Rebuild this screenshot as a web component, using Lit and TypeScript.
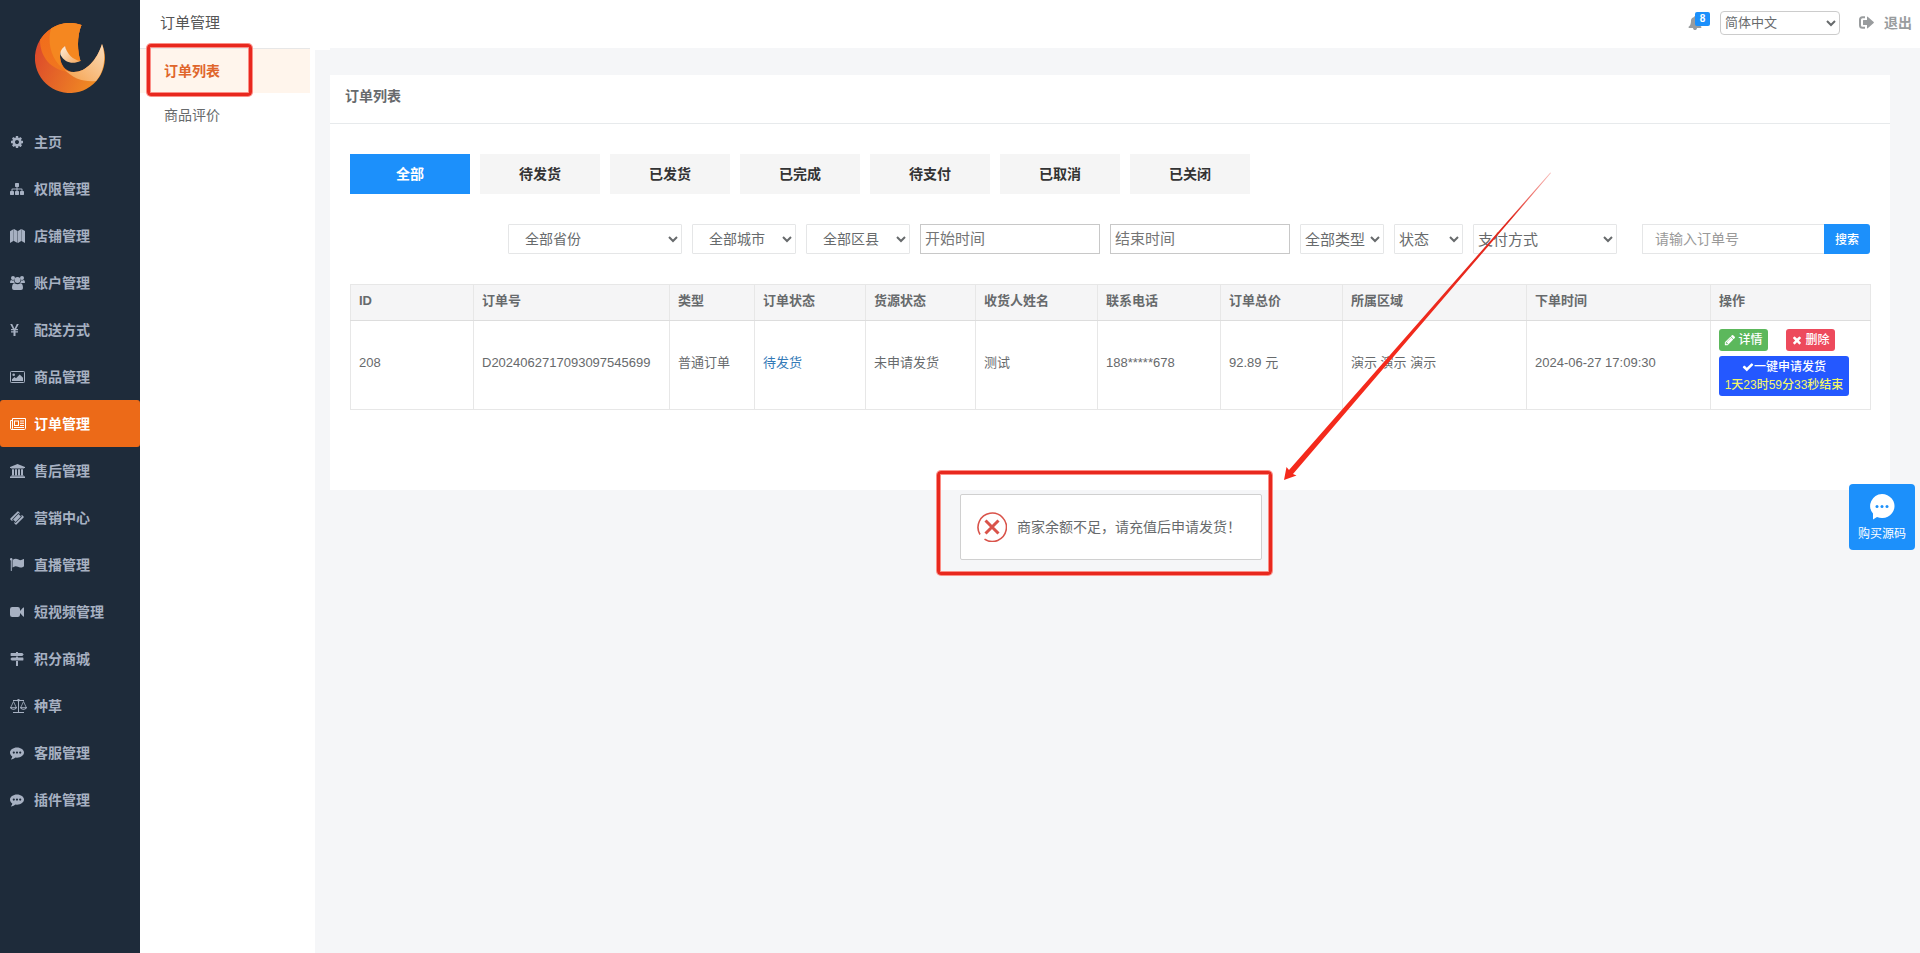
import { LitElement, html, css, svg } from "lit";
import { customElement } from "lit/decorators.js";
import { classMap } from "lit/directives/class-map.js";

interface Glyph {
  box: string;
  w: number;
  h: number;
  body: unknown;
}

const fa = (d: string, size: number): Glyph => ({
  box: "0 0 1792 1792",
  w: size,
  h: size,
  body: svg`<path d=${d}></path>`,
});

const comment = (): Glyph => ({
  box: "0 0 14 14",
  w: 14,
  h: 14,
  body: svg`<path fill-rule="evenodd" d="M7 1.5C10.9 1.5 14 3.9 14 6.6S10.9 11.7 7 11.7Q6.2 11.7 5.5 11.6Q3.7 13.2 1.3 13.4Q1 13.4 1 13.1Q2.200 12 2.300 10.500C.9 9.600 0 8.200 0 6.600C0 3.900 3.100 1.500 7 1.500ZM3.800 5.500A1.100 1.100 0 1 0 3.800 7.700A1.100 1.100 0 1 0 3.800 5.500ZM7 5.500A1.100 1.100 0 1 0 7 7.700A1.100 1.100 0 1 0 7 5.500ZM10.200 5.500A1.100 1.100 0 1 0 10.200 7.700A1.100 1.100 0 1 0 10.200 5.500Z"></path>`,
});

const ICONS: Record<string, Glyph> = {
  cog: fa(
    "M1152 896q0-106-75-181t-181-75-181 75-75 181 75 181 181 75 181-75 75-181zm512-109v222q0 12-8 23t-20 13l-185 28q-19 54-39 91 35 50 107 138 10 12 10 25t-9 23q-27 37-99 108t-94 71q-12 0-26-9l-138-108q-44 23-91 38-16 136-29 186-7 28-36 28h-222q-14 0-24.500-8.500t-11.500-21.500l-28-184q-49-16-90-37l-141 107q-10 9-25 9-14 0-25-11-126-114-165-168-7-10-7-23 0-12 8-23 15-21 51-66.500t54-70.500q-27-50-41-99l-183-27q-13-2-21-12.500t-8-23.500v-222q0-12 8-23t19-13l186-28q14-46 39-92-40-57-107-138-10-12-10-24 0-10 9-23 26-36 98.500-107.500t94.500-71.500q13 0 26 10l138 107q44-23 91-38 16-136 29-186 7-28 36-28h222q14 0 24.500 8.500t11.500 21.500l28 184q49 16 90 37l142-107q9-9 24-9 13 0 25 10 129 119 165 170 7 8 7 22 0 12-8 23-15 21-51 66.500t-54 70.500q26 50 41 98l183 28q13 2 21 12.500t8 23.500z",
    14
  ),
  sitemap: fa(
    "M1792 1248v320q0 40-28 68t-68 28h-320q-40 0-68-28t-28-68v-320q0-40 28-68t68-28h96v-192h-512v192h96q40 0 68 28t28 68v320q0 40-28 68t-68 28h-320q-40 0-68-28t-28-68v-320q0-40 28-68t68-28h96v-192h-512v192h96q40 0 68 28t28 68v320q0 40-28 68t-68 28h-320q-40 0-68-28t-28-68v-320q0-40 28-68t68-28h96v-192q0-52 38-90t90-38h512v-192h-96q-40 0-68-28t-28-68v-320q0-40 28-68t68-28h320q40 0 68 28t28 68v320q0 40-28 68t-68 28h-96v192h512q52 0 90 38t38 90v192h96q40 0 68 28t28 68z",
    14
  ),
  map: {
    box: "0 0 15 14",
    w: 15,
    h: 14,
    body: svg`<path d="M0 2.200L3.700 0V11.800L0 14ZM4 0L7.600 2V14L4 12ZM8 2L11.200 0V12L8 14ZM11.500 0L15 2V14L11.500 12Z"></path>`,
  },
  users: {
    box: "0 0 15 14",
    w: 15,
    h: 14,
    body: svg`<circle cx="3" cy="2" r="2"></circle><circle cx="12" cy="2" r="2"></circle><circle cx="7.500" cy="4" r="3"></circle><path d="M0 6.500Q0 4 1.200 4Q3 5 4 4.300Q4 6.200 5 7H1.200Q0 7 0 6.500ZM15 6.500Q15 4 13.800 4Q12 5 11 4.300Q11 6.200 10 7H13.800Q15 7 15 6.500ZM2 12Q2 7.200 4.600 7.200Q6 8.200 7.500 8.200T10.400 7.200Q13 7.200 13 12Q13 14 11 14H4Q2 14 2 12Z"></path>`,
  },
  yen: {
    box: "0 0 9 12",
    w: 9,
    h: 12,
    body: svg`<path d="M.2 0H2.200L4.500 4.700L6.800 0H8.800L6.200 5H8V6.200H5.500V7.300H8V8.500H5.500V12H3.500V8.500H1V7.300H3.500V6.200H1V5H2.800Z"></path>`,
  },
  image: {
    box: "0 0 15 12",
    w: 15,
    h: 12,
    body: svg`<rect x=".500" y=".500" width="14" height="11" rx=".800" fill="none" stroke="currentColor"></rect><circle cx="3.700" cy="3.700" r="1.300"></circle><path d="M2 10V8.200L4.500 6L6 7.300L9.700 3.500L13 6.700V10Z"></path>`,
  },
  paper: {
    box: "0 0 16 12",
    w: 16,
    h: 12,
    body: svg`<path d="M2.500 .500H15.500V10.300Q15.500 11.500 14.300 11.500H1.700Q.500 11.500 .500 10.300V2.500H2.500M2.500 .500V10.300Q2.500 11.400 1.500 11.500" fill="none" stroke="currentColor"></path><path fill-rule="evenodd" d="M4 2.500H9V8H4ZM5 3.500V7H8V3.500ZM10 2.500H14V3.500H10ZM10 4.700H14V5.700H10ZM10 7H14V8H10ZM4 9H14V10H4Z"></path>`,
  },
  bank: {
    box: "0 0 15 14",
    w: 15,
    h: 14,
    body: svg`<path d="M7.500 0L15 3V4H14Q14 4.600 13.300 4.600H1.700Q1 4.600 1 4H0V3ZM2 5.200H4V11.200H5V5.200H7V11.200H8V5.200H10V11.200H11V5.200H13V11.200H13.400Q14 11.200 14 11.800H1Q1 11.200 1.600 11.200H2ZM.700 12.300H14.300Q15 12.300 15 13V14H0V13Q0 12.300 .700 12.300Z"></path>`,
  },
  ticket: {
    box: "0 0 14 14",
    w: 14,
    h: 14,
    body: svg`<path fill-rule="evenodd" d="M8.400 .400L9.700 1.700Q9.200 3.300 10.200 4T12.300 4.300L13.600 5.600Q14 6.100 13.600 6.500L6.500 13.600Q6 14 5.600 13.600L4.300 12.300Q4.800 10.700 3.800 10T1.700 9.700L.4 8.400Q0 7.900 .4 7.500L7.500 .4Q8 0 8.400 .4ZM8.400 2.100L2.100 8.400L5.600 11.900L11.900 5.600ZM8.400 3.100L10.900 5.600L5.600 10.900L3.100 8.400Z"></path>`,
  },
  flag: {
    box: "0 0 14 13",
    w: 14,
    h: 13,
    body: svg`<circle cx="1.200" cy="1.200" r="1.200"></circle><path d="M.800 1H1.800V12.500Q1.800 13 1.300 13T.800 12.500ZM2.500 2Q4.300 .8 5.800 .8Q7 .8 8.500 1.600T11 2Q12 1.800 13.300 1Q14 .8 14 1.500V8Q14 8.400 13.500 8.700Q11.600 9.700 10.300 9.600Q9.200 9.500 7.900 8.800T5.600 8.200Q4.200 8.400 2.500 9.400Z"></path>`,
  },
  video: {
    box: "0 0 14 12",
    w: 14,
    h: 12,
    body: svg`<path d="M2.200 1H7.800Q10 1 10 3.200V4.900L13.200 1.600Q14 1 14 2V10Q14 11 13.200 10.400L10 7.100V8.800Q10 11 7.800 11H2.200Q0 11 0 8.800V3.200Q0 1 2.200 1Z"></path>`,
  },
  signs: {
    box: "0 0 14 14",
    w: 14,
    h: 14,
    body: svg`<path d="M6 0H8V1H12.300L13.700 2.500L12.300 4H1Q.6 4 .6 3.600V1.400Q.6 1 1 1H6ZM6 4.500H8V5.500H13Q13.400 5.500 13.400 5.900V8.100Q13.400 8.500 13 8.500H1.700L.3 7L1.700 5.500H6ZM6 9H8V13.500Q8 14 7.500 14H6.500Q6 14 6 13.500Z"></path>`,
  },
  scales: {
    box: "0 0 17 14",
    w: 17,
    h: 14,
    body: svg`<g fill="none" stroke="currentColor"><path d="M3 1.500H14M8.500 1V13M3 13.500H14"></path><path d="M.700 8.500L3.500 2.500L6.300 8.500M10.700 8.500L13.500 2.500L16.300 8.500" stroke-width=".8"></path></g><circle cx="8.500" cy="1.300" r="1.300"></circle><path fill-rule="evenodd" d="M0 8H7Q6.600 10.800 3.500 10.800T0 8ZM1.200 8.700Q1.800 9.800 3.500 9.800T5.800 8.700ZM10 8H17Q16.600 10.800 13.500 10.800T10 8ZM11.200 8.700Q11.800 9.800 13.500 9.800T15.800 8.700Z"></path>`,
  },
  comment: comment(),
  bell: fa(
    "M1728 1408q0 52-38 90t-90 38h-448q0 106-75 181t-181 75-181-75-75-181h-448q-52 0-90-38t-38-90q50-42 91-88t85-119.500 74.500-158.500 50-206 19.500-260q0-152 117-282.500t307-158.500q-8-19-8-39 0-40 28-68t68-28 68 28 28 68q0 20-8 39 190 28 307 158.500t117 282.500q0 139 19.500 260t50 206 74.500 158.500 85 119.500 91 88z",
    14
  ),
  signout: {
    box: "0 0 15 13",
    w: 15,
    h: 13,
    body: svg`<path d="M6 1.200H3.500Q1 1.200 1 3.700V9.300Q1 11.800 3.500 11.800H6" fill="none" stroke="currentColor" stroke-width="2"></path><path d="M4.500 4H8V1.200Q8 .300 8.700 .800L14.700 6Q15.100 6.500 14.700 7L8.700 12.200Q8 12.700 8 11.800V9H4.500Q4 9 4 8.500V4.500Q4 4 4.500 4Z"></path>`,
  },
  pencil: fa(
    "M491 1536l91-91-235-235-91 91v107h128v128h107zm523-928q0-22-22-22-10 0-17 7l-542 542q-7 7-7 17 0 22 22 22 10 0 17-7l542-542q7-7 7-17zm-54-192l416 416-832 832h-416v-416zm683 96q0 53-37 90l-166 166-416-416 166-165q36-38 90-38 53 0 91 38l235 234q37 39 37 91z",
    12
  ),
  times: fa(
    "M1490 1322q0 40-28 68l-136 136q-28 28-68 28t-68-28l-294-294-294 294q-28 28-68 28t-68-28l-136-136q-28-28-28-68t28-68l294-294-294-294q-28-28-28-68t28-68l136-136q28-28 68-28t68 28l294 294 294-294q28-28 68-28t68 28l136 136q28 28 28 68t-28 68l-294 294 294 294q28 28 28 68z",
    12
  ),
  check: fa(
    "M1671 566q0 40-28 68l-724 724-136 136q-28 28-68 28t-68-28l-136-136-362-362q-28-28-28-68t28-68l136-136q28-28 68-28t68 28l294 295 656-657q28-28 68-28t68 28l136 136q28 28 28 68z",
    12
  ),
};

const icon = (name: string) => {
  const g = ICONS[name];
  return html`<svg class="icon" viewBox=${g.box} width=${g.w} height=${g.h} fill="currentColor" aria-hidden="true">${g.body}</svg>`;
};

const MENU = [
  ["cog", "主页"],
  ["sitemap", "权限管理"],
  ["map", "店铺管理"],
  ["users", "账户管理"],
  ["yen", "配送方式"],
  ["image", "商品管理"],
  ["paper", "订单管理"],
  ["bank", "售后管理"],
  ["ticket", "营销中心"],
  ["flag", "直播管理"],
  ["video", "短视频管理"],
  ["signs", "积分商城"],
  ["scales", "种草"],
  ["comment", "客服管理"],
  ["comment", "插件管理"],
];

const TABS = ["全部", "待发货", "已发货", "已完成", "待支付", "已取消", "已关闭"];

const COLUMNS: [string, number][] = [
  ["ID", 123],
  ["订单号", 196],
  ["类型", 85],
  ["订单状态", 111],
  ["货源状态", 110],
  ["收货人姓名", 122],
  ["联系电话", 123],
  ["订单总价", 122],
  ["所属区域", 184],
  ["下单时间", 184],
  ["操作", 160],
];

@customElement("app-root")
export class AppRoot extends LitElement {
  static styles = css`
    :host {
      display: block;
      min-height: 100vh;
      font-family: "Liberation Sans", "Noto Sans CJK SC", sans-serif;
      font-size: 13px;
      line-height: 18px;
      color: #676a6c;
    }
    * {
      box-sizing: border-box;
    }
    a {
      color: inherit;
      text-decoration: none;
    }
    button,
    input,
    select {
      font-family: inherit;
      color: inherit;
      margin: 0;
    }
    ul {
      list-style: none;
      margin: 0;
      padding: 0;
    }
    h1,
    h2 {
      margin: 0;
      font-weight: 400;
    }
    .icon {
      display: block;
      flex: none;
    }
    .page {
      position: relative;
      display: flex;
      min-height: 100vh;
      overflow: hidden;
      background: #f5f6f8;
    }

    .side {
      flex: none;
      width: 140px;
      background: #1e2b3a;
    }
    .logo {
      display: block;
      padding: 23px 35px 25px;
    }
    .logo svg {
      display: block;
    }
    .item {
      display: flex;
      align-items: center;
      height: 47px;
      padding-left: 10px;
      border-radius: 3px;
      font-size: 14px;
      font-weight: 600;
      color: #a7b1c2;
    }
    .item .slot {
      width: 24px;
    }
    .item.on {
      background: #ec6a18;
      color: #fff;
    }

    .sub {
      flex: none;
      width: 175px;
      padding-right: 5px;
      background: #fff;
    }
    .sub-title {
      height: 49px;
      padding: 13px 20px;
      border-bottom: 1px solid #e7e7e7;
      font-size: 15px;
      line-height: 20px;
      color: #555;
    }
    .sub-item {
      position: relative;
      display: block;
      padding: 12px 24px;
      font-size: 14px;
      line-height: 20px;
    }
    .sub-item.on {
      background: #fff5ec;
      font-weight: 600;
      color: #e0662c;
    }
    .mark {
      position: absolute;
      border: 3px solid #e8281e;
      border-radius: 4px;
      box-shadow: 0 0 0 1px #fb8f87, inset 0 0 0 1px #fb8f87;
      pointer-events: none;
    }
    .sub-item .mark {
      inset: -5px 58px -3px 7px;
    }

    .main {
      flex: 1;
      min-width: 0;
      display: flex;
      flex-direction: column;
    }
    .top {
      flex: none;
      display: flex;
      justify-content: flex-end;
      align-items: center;
      height: 48px;
      padding: 0 8px 3px 0;
      background: #fff;
      color: #999c9e;
    }
    .bell {
      position: relative;
      width: 24px;
      height: 14px;
      padding: 0;
      margin-right: 8px;
      border: 0;
      background: none;
      color: #999c9e;
    }
    .badge {
      position: absolute;
      right: 2px;
      top: -4px;
      width: 15px;
      height: 14px;
      border-radius: 2px;
      background: #1c90fb;
      color: #fff;
      font-size: 10px;
      line-height: 14px;
      font-weight: 600;
    }
    .lang {
      width: 120px;
      height: 24px;
      padding: 0;
      border: 1px solid #ccc;
      border-radius: 4px;
      background: #fff;
      font-size: 13px;
      color: #676a6c;
    }
    .logout {
      display: flex;
      align-items: center;
      gap: 10px;
      margin-left: 19px;
      font-size: 14px;
      font-weight: 600;
    }
    .body {
      flex: 1;
      display: flex;
    }
    .gutter {
      flex: none;
      width: 15px;
      border-top: 2px solid #fff;
    }
    .content {
      flex: 1;
      min-width: 0;
      padding: 27px 30px 27px 0;
    }

    .panel {
      background: #fff;
      padding-bottom: 80px;
    }
    .panel-title {
      padding: 11px 15px 17px;
      border-bottom: 1px solid #e7eaec;
      font-size: 14px;
      line-height: 20px;
      font-weight: 600;
    }
    .panel-body {
      padding: 30px 20px 0;
    }
    .tabs {
      display: flex;
      gap: 10px;
    }
    .tab {
      width: 120px;
      height: 40px;
      padding: 0 0 2px;
      border: 0;
      background: #f5f5f5;
      font-size: 14px;
      font-weight: 600;
      color: #333;
    }
    .tab.on {
      background: #1c90fb;
      color: #fff;
    }
    .filters {
      display: flex;
      justify-content: flex-end;
      gap: 10px;
      margin: 30px 0;
    }
    .pick {
      height: 30px;
      padding: 0;
      border: 1px solid #e5e6e7;
      border-radius: 1px;
      background: #fff;
      font-size: 15px;
    }
    .pick.area {
      padding-left: 12px;
      font-size: 14px;
    }
    .w174 {
      width: 174px;
    }
    .w104 {
      width: 104px;
    }
    .w84 {
      width: 84px;
    }
    .w69 {
      width: 69px;
    }
    .w144 {
      width: 144px;
    }
    .date {
      width: 180px;
      height: 30px;
      padding: 0 4px 2px;
      border: 1px solid #c8c8c8;
      font-size: 15px;
    }
    .date::placeholder {
      color: #757575;
    }
    .search {
      display: flex;
      margin-left: 15px;
    }
    .search input {
      width: 182px;
      height: 30px;
      padding: 0 12px;
      border: 1px solid #e5e6e7;
      border-right: 0;
      border-radius: 1px 0 0 1px;
      font-size: 14px;
    }
    .search input::placeholder {
      color: #999;
    }
    .search button {
      width: 46px;
      height: 30px;
      padding: 0 0 2px;
      border: 0;
      border-radius: 0 3px 3px 0;
      background: #1c90fb;
      color: #fff;
      font-size: 12px;
      font-weight: 500;
    }

    table {
      width: 100%;
      table-layout: fixed;
      border-collapse: collapse;
    }
    th,
    td {
      border: 1px solid #e7e7e7;
      text-align: left;
      white-space: nowrap;
    }
    th {
      height: 36px;
      padding: 0 8px 4px;
      background: #f5f5f6;
      border-bottom-color: #ddd;
      font-weight: 600;
    }
    td {
      height: 89px;
      padding: 0 8px 4px;
    }
    td:last-child {
      padding: 7px 8px 12px;
    }
    td .link {
      color: #337ab7;
    }
    .ops {
      display: grid;
      grid-template-columns: 49px 49px;
      gap: 5px 18px;
    }
    .btn {
      display: flex;
      align-items: center;
      justify-content: center;
      gap: 2px;
      height: 22px;
      padding: 0;
      border: 0;
      border-radius: 3px;
      color: #fff;
      font-size: 12px;
      line-height: 18px;
      font-weight: 500;
    }
    .btn.info {
      background: #5cb85c;
    }
    .btn.del {
      background: #ed4a5c;
    }
    .btn.ship {
      grid-column: 1 / 3;
      flex-direction: column;
      gap: 0;
      width: 130px;
      height: 40px;
      background: #2458ff;
    }
    .ship .row {
      display: flex;
      align-items: center;
    }
    .ship .left {
      color: #f3f56a;
    }

    .notice {
      position: absolute;
      left: calc(50% + 151px);
      top: calc(50% + 50px);
      transform: translate(-50%, -50%);
      display: flex;
      align-items: center;
      gap: 10px;
      height: 66px;
      padding: 0 20px 0 16px;
      border: 1px solid #d0d0d0;
      border-radius: 2px;
      background: #fff;
      font-size: 14px;
      line-height: 24px;
      white-space: nowrap;
    }
    .notice .mark {
      inset: -24px -11px -16px -24px;
    }
    .arrow {
      position: absolute;
      left: calc(50% + 320px);
      top: calc(50% - 306px);
      pointer-events: none;
    }
    .buy {
      position: absolute;
      right: 5px;
      top: 484px;
      display: flex;
      flex-direction: column;
      align-items: center;
      gap: 5px;
      width: 66px;
      height: 66px;
      padding: 10px 0 0;
      border: 0;
      border-radius: 4px;
      background: #1c90fb;
      color: #fff;
      font-size: 12px;
      line-height: 18px;
    }
  `;

  private logo() {
    return html`<svg width="70" height="70" viewBox="0 0 70 70" role="img" aria-label="logo">
      <defs>
        <linearGradient id="base" x1="0" y1=".4" x2="1" y2=".8">
          <stop offset="0" stop-color="#dc4a2b"></stop>
          <stop offset="1" stop-color="#f39322"></stop>
        </linearGradient>
        <linearGradient id="mid" x1="0" y1="0" x2=".6" y2="1">
          <stop offset="0" stop-color="#f26a1b"></stop>
          <stop offset="1" stop-color="#f0781f"></stop>
        </linearGradient>
        <linearGradient id="pale" x1="0" y1="1" x2="1" y2="0">
          <stop offset="0" stop-color="#f5a04a"></stop>
          <stop offset="1" stop-color="#fbdcba"></stop>
        </linearGradient>
        <linearGradient id="leaf" x1="0" y1="0" x2="1" y2="1">
          <stop offset="0" stop-color="#fff0de"></stop>
          <stop offset="1" stop-color="#f4a65c"></stop>
        </linearGradient>
      </defs>
      <path fill="url(#base)" d="M46.500 2A35 35 0 1 0 67 21C62 37 51 49 39 49C30 49 25 41 25 32C25 28 28 25 30 23C32 32 38 38 45.500 38C42 28 42 12 46.500 2Z"></path>
      <path fill="url(#mid)" d="M46.500 2A35 35 0 0 0 5 17C5 34 16 47 34 49C25 43 25 36 25 32C25 28 28 25 30 23C32 32 38 38 45.500 38C42 28 42 12 46.500 2Z"></path>
      <path fill="#f58720" d="M46.500 2A35 35 0 0 0 16 5.500C12 20 16 38 31 48C25 43 25 36 25 32C25 28 28 25 30 23C32 32 38 38 45.500 38C42 28 42 12 46.500 2Z"></path>
      <path fill="url(#pale)" d="M67 21C71.500 34 69 49 61 58C49 59 38 56 29 46C32 48.500 35 49 39 49C51 49 62 37 67 21Z"></path>
      <path fill="url(#leaf)" d="M30 23C26 26 25 29 25.500 32C30 40 38 41.500 45.500 38C38 37 32 31 30 23Z"></path>
    </svg>`;
  }

  private pick(label: string, cls: string, name = label) {
    return html`<select class="pick ${cls}" aria-label=${name}><option>${label}</option></select>`;
  }

  render() {
    return html`
      <div class="page">
        <nav class="side" aria-label="主菜单">
          <a class="logo" href="#">${this.logo()}</a>
          <ul>
            ${MENU.map(
              ([glyph, text]) => html`<li>
                <a href="#" class=${classMap({ item: true, on: text === "订单管理" })}>
                  <span class="slot">${icon(glyph)}</span>${text}
                </a>
              </li>`
            )}
          </ul>
        </nav>
        <nav class="sub" aria-label="订单管理">
          <h1 class="sub-title">订单管理</h1>
          <a class="sub-item on" href="#">订单列表<span class="mark"></span></a>
          <a class="sub-item" href="#">商品评价</a>
        </nav>
        <div class="main">
          <header class="top">
            <button class="bell" aria-label="消息">${icon("bell")}<span class="badge">8</span></button>
            <select class="lang" aria-label="语言"><option>简体中文</option></select>
            <a class="logout" href="#">${icon("signout")}退出</a>
          </header>
          <div class="body">
            <div class="gutter"></div>
            <main class="content">
              <section class="panel">
                <h2 class="panel-title">订单列表</h2>
                <div class="panel-body">
                  <div class="tabs">
                    ${TABS.map((t, i) => html`<button class=${classMap({ tab: true, on: i === 0 })}>${t}</button>`)}
                  </div>
                  <div class="filters">
                    ${this.pick("全部省份", "area w174")} ${this.pick("全部城市", "area w104")}
                    ${this.pick("全部区县", "area w104")}
                    <input class="date" type="text" placeholder="开始时间" aria-label="开始时间" />
                    <input class="date" type="text" placeholder="结束时间" aria-label="结束时间" />
                    ${this.pick("全部类型", "w84")} ${this.pick("状态", "w69")} ${this.pick("支付方式", "w144")}
                    <div class="search">
                      <input type="text" placeholder="请输入订单号" aria-label="订单号" />
                      <button>搜索</button>
                    </div>
                  </div>
                  <table>
                    <colgroup>
                      ${COLUMNS.map(([, w]) => html`<col width=${w} />`)}
                    </colgroup>
                    <thead>
                      <tr>
                        ${COLUMNS.map(([name]) => html`<th scope="col">${name}</th>`)}
                      </tr>
                    </thead>
                    <tbody>
                      <tr>
                        <td>208</td>
                        <td>D2024062717093097545699</td>
                        <td>普通订单</td>
                        <td><a class="link" href="#">待发货</a></td>
                        <td>未申请发货</td>
                        <td>测试</td>
                        <td>188*****678</td>
                        <td>92.89 元</td>
                        <td>演示 演示 演示</td>
                        <td>2024-06-27 17:09:30</td>
                        <td>
                          <div class="ops">
                            <button class="btn info">${icon("pencil")}详情</button>
                            <button class="btn del">${icon("times")}删除</button>
                            <button class="btn ship">
                              <span class="row">${icon("check")}一键申请发货</span>
                              <span class="left">1天23时59分33秒结束</span>
                            </button>
                          </div>
                        </td>
                      </tr>
                    </tbody>
                  </table>
                </div>
              </section>
            </main>
          </div>
        </div>

        <div class="notice" role="alert">
          <svg class="icon" width="30" height="30" viewBox="0 0 30 30" fill="none" stroke="#d9534a">
            <path d="M3 22.500A14.200 14.200 0 1 1 7.500 27.200" stroke-width="1.600"></path>
            <path d="M8.500 8.500L21.500 21.500M21.500 8.500L8.500 21.500" stroke-width="3"></path>
          </svg>
          商家余额不足，请充值后申请发货！
          <span class="mark"></span>
        </div>
        <svg class="arrow" width="275" height="315" viewBox="0 0 275 315" aria-hidden="true">
          <defs>
            <linearGradient id="tail" x1="1" y1="0" x2="0" y2="1">
              <stop offset="0" stop-color="#e8281e" stop-opacity=".3"></stop>
              <stop offset=".15" stop-color="#e0281e"></stop>
              <stop offset=".6" stop-color="#f42a1c"></stop>
            </linearGradient>
          </defs>
          <path fill="url(#tail)" d="M271 2L270.300 1.500L9 299L6.500 296L4 309L16.500 304.500L13 303Z"></path>
        </svg>
        <button class="buy">
          <svg class="icon" width="26" height="26" viewBox="0 0 26 26">
            <path fill="#fff" d="M13 0A12.500 12 0 1 1 8 23L4 25.500V19.500A12.500 12 0 0 1 13 0Z"></path>
            <circle cx="8" cy="12.500" r="1.500" fill="#1c90fb"></circle>
            <circle cx="13" cy="12.500" r="1.500" fill="#1c90fb"></circle>
            <circle cx="18" cy="12.500" r="1.500" fill="#1c90fb"></circle>
          </svg>
          购买源码
        </button>
      </div>
    `;
  }
}
